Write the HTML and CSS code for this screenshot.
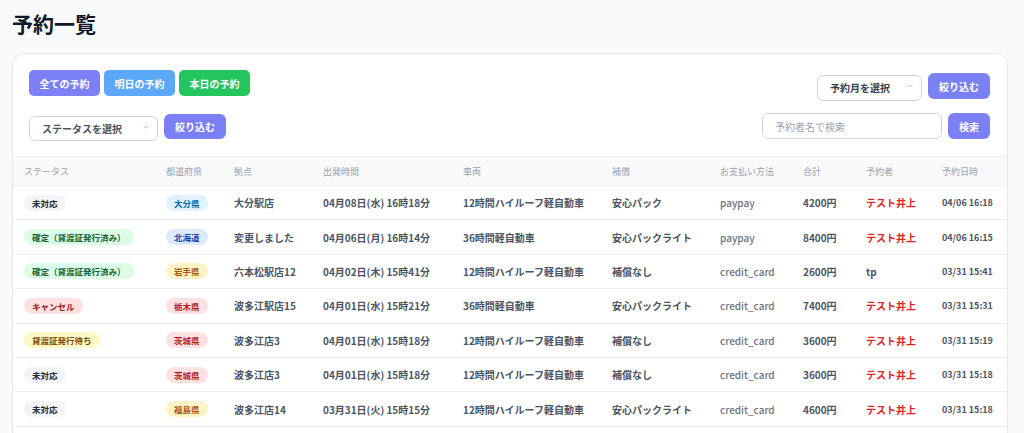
FILE: index.html
```html
<!DOCTYPE html>
<html lang="ja">
<head>
    <meta charset="UTF-8">
    <meta name="viewport" content="width=device-width, initial-scale=1.0">
    <title>予約一覧</title>
    <link rel="stylesheet" href="styles.css">
</head>
<body>

<h1 class="page-title">予約一覧</h1>

<div class="card">
    <div class="toolbar">
        <div class="toolbar-row">
            <div class="tab-buttons">
                <button class="tab-button tab-all">全ての予約</button>
                <button class="tab-button tab-tomorrow">明日の予約</button>
                <button class="tab-button tab-today">本日の予約</button>
            </div>
            <div class="filter-group month-filter">
                <div class="select-wrap month-select">
                    <select class="filter-select dark">
                        <option>予約月を選択</option>
                    </select>
                    <svg class="chevron" viewBox="0 0 10 6"><path d="M1 1l4 4 4-4" fill="none" stroke="#9ca3af" stroke-width="1.2"/></svg>
                </div>
                <button class="action-button filter-button">絞り込む</button>
            </div>
        </div>
        <div class="toolbar-row second-row">
            <div class="filter-group status-filter">
                <div class="select-wrap status-select">
                    <select class="filter-select">
                        <option>ステータスを選択</option>
                    </select>
                    <svg class="chevron" viewBox="0 0 10 6"><path d="M1 1l4 4 4-4" fill="none" stroke="#9ca3af" stroke-width="1.2"/></svg>
                </div>
                <button class="action-button filter-button">絞り込む</button>
            </div>
            <div class="filter-group">
                <input class="search-input" type="text" placeholder="予約者名で検索">
                <button class="action-button search-button">検索</button>
            </div>
        </div>
    </div>

    <table class="reservations">
        <colgroup>
            <col style="width:142px">
            <col style="width:68px">
            <col style="width:89px">
            <col style="width:140px">
            <col style="width:149px">
            <col style="width:108px">
            <col style="width:83px">
            <col style="width:63px">
            <col style="width:76px">
            <col>
        </colgroup>
        <thead>
            <tr>
                <th>ステータス</th>
                <th>都道府県</th>
                <th>拠点</th>
                <th>出発時間</th>
                <th>車両</th>
                <th>補償</th>
                <th>お支払い方法</th>
                <th>合計</th>
                <th>予約者</th>
                <th>予約日時</th>
            </tr>
        </thead>
        <tbody>
            <tr>
                <td><span class="badge status-new">未対応</span></td>
                <td><span class="badge pref-sky">大分県</span></td>
                <td>大分駅店</td>
                <td>04月08日(水) 16時18分</td>
                <td>12時間ハイルーフ軽自動車</td>
                <td>安心パック</td>
                <td class="payment">paypay</td>
                <td>4200円</td>
                <td class="customer">テスト井上</td>
                <td class="created">04/06 16:18</td>
            </tr>
            <tr>
                <td><span class="badge status-done">確定（貸渡証発行済み）</span></td>
                <td><span class="badge pref-blue">北海道</span></td>
                <td>変更しました</td>
                <td>04月06日(月) 16時14分</td>
                <td>36時間軽自動車</td>
                <td>安心パックライト</td>
                <td class="payment">paypay</td>
                <td>8400円</td>
                <td class="customer">テスト井上</td>
                <td class="created">04/06 16:15</td>
            </tr>
            <tr>
                <td><span class="badge status-done">確定（貸渡証発行済み）</span></td>
                <td><span class="badge pref-yellow">岩手県</span></td>
                <td>六本松駅店12</td>
                <td>04月02日(木) 15時41分</td>
                <td>12時間ハイルーフ軽自動車</td>
                <td>補償なし</td>
                <td class="payment">credit_card</td>
                <td>2600円</td>
                <td>tp</td>
                <td class="created">03/31 15:41</td>
            </tr>
            <tr>
                <td><span class="badge status-cancel">キャンセル</span></td>
                <td><span class="badge pref-red">栃木県</span></td>
                <td>波多江駅店15</td>
                <td>04月01日(水) 15時21分</td>
                <td>36時間軽自動車</td>
                <td>安心パックライト</td>
                <td class="payment">credit_card</td>
                <td>7400円</td>
                <td class="customer">テスト井上</td>
                <td class="created">03/31 15:31</td>
            </tr>
            <tr>
                <td><span class="badge status-wait">貸渡証発行待ち</span></td>
                <td><span class="badge pref-red">茨城県</span></td>
                <td>波多江店3</td>
                <td>04月01日(水) 15時18分</td>
                <td>12時間ハイルーフ軽自動車</td>
                <td>補償なし</td>
                <td class="payment">credit_card</td>
                <td>3600円</td>
                <td class="customer">テスト井上</td>
                <td class="created">03/31 15:19</td>
            </tr>
            <tr>
                <td><span class="badge status-new">未対応</span></td>
                <td><span class="badge pref-red">茨城県</span></td>
                <td>波多江店3</td>
                <td>04月01日(水) 15時18分</td>
                <td>12時間ハイルーフ軽自動車</td>
                <td>補償なし</td>
                <td class="payment">credit_card</td>
                <td>3600円</td>
                <td class="customer">テスト井上</td>
                <td class="created">03/31 15:18</td>
            </tr>
            <tr>
                <td><span class="badge status-new">未対応</span></td>
                <td><span class="badge pref-yellow">福島県</span></td>
                <td>波多江店14</td>
                <td>03月31日(火) 15時15分</td>
                <td>12時間ハイルーフ軽自動車</td>
                <td>安心パックライト</td>
                <td class="payment">credit_card</td>
                <td>4600円</td>
                <td class="customer">テスト井上</td>
                <td class="created">03/31 15:18</td>
            </tr>
        </tbody>
    </table>
</div>

</body>
</html>
```

FILE: styles.css
```css
body {
    margin: 0;
    padding: 8px 16px 0 12px;
    background-color: #f8fafc;
    font-family: "Noto Sans CJK JP", "Noto Sans", sans-serif;
    color: #111827;
}

.page-title {
    margin: 0 0 15px;
    font-size: 21px;
    line-height: 30px;
    font-weight: bold;
    color: #111827;
}

.card {
    background-color: white;
    border: 1px solid #e5e7eb;
    border-radius: 12px;
    box-shadow: 0 1px 2px rgba(0, 0, 0, 0.04);
    padding: 16px 0 16px;
    overflow: hidden;
}

.toolbar {
    padding: 0 17px 0 16px;
    margin-bottom: 17px;
}

.toolbar-row {
    display: flex;
    justify-content: space-between;
    align-items: flex-start;
    height: 29px;
}

.second-row {
    margin-top: 14px;
    height: 26px;
}

.tab-buttons {
    display: flex;
    gap: 4px;
}

button {
    font-family: inherit;
    border: none;
    cursor: pointer;
    color: white;
    font-weight: bold;
    font-size: 10px;
}

.tab-button {
    height: 26px;
    padding: 0 10px;
    border-radius: 5px;
    width: 71px;
}

.tab-all {
    background-color: #7c80f6;
}

.tab-tomorrow {
    background-color: #5ca7f6;
}

.tab-today {
    background-color: #22c55e;
}

.filter-group {
    display: flex;
    gap: 6px;
}

.month-filter {
    margin-top: 3px;
}

.status-filter {
    margin-top: 1px;
}

.select-wrap {
    position: relative;
}

.filter-select {
    appearance: none;
    -webkit-appearance: none;
    height: 26px;
    background-color: white;
    border: 1px solid #d1d5db;
    border-radius: 6px;
    padding: 0 0 0 12px;
    font-family: inherit;
    font-size: 10px;
    font-weight: 600;
    color: #4b5563;
}

.filter-select.dark {
    color: #374151;
}

.month-select .filter-select {
    width: 105px;
}

.status-select .filter-select {
    width: 129px;
    height: 25px;
}

.chevron {
    position: absolute;
    right: 9px;
    top: 11px;
    width: 6px;
    height: 4px;
}

.action-button {
    height: 26px;
    border-radius: 6px;
    background-color: #7c80f6;
}

.filter-button {
    width: 62px;
}

.status-filter .filter-button {
    height: 25px;
}

.search-button {
    width: 42px;
}

.search-input {
    width: 180px;
    height: 26px;
    box-sizing: border-box;
    border: 1px solid #d1d5db;
    border-radius: 6px;
    padding: 0 12px;
    font-family: inherit;
    font-size: 10px;
}

.search-input::placeholder {
    color: #9ca3af;
}

.reservations {
    width: 100%;
    table-layout: fixed;
    border-collapse: collapse;
}

.reservations th {
    height: 28px;
    padding: 0 0 0 11px;
    background-color: #f9fafb;
    border-top: 1px solid #eceef1;
    text-align: left;
    font-size: 9px;
    font-weight: normal;
    color: #9ca3af;
    white-space: nowrap;
}

.reservations td {
    height: 33.4px;
    padding: 0 0 0 11px;
    border-top: 1px solid #eceef1;
    border-bottom: 1px solid #eceef1;
    font-size: 10px;
    font-weight: 600;
    color: #4b5563;
    white-space: nowrap;
}

.reservations td.payment {
    font-weight: 500;
    color: #6b7280;
}

.reservations td.customer {
    color: #dc2626;
    font-weight: bold;
}

.reservations td.created {
    font-size: 9px;
}

.badge {
    display: inline-block;
    height: 16px;
    line-height: 16px;
    padding: 0 8px;
    border-radius: 8px;
    font-size: 8.5px;
    font-weight: bold;
}

.status-new {
    background-color: #f3f4f6;
    color: #1f2937;
}

.status-done {
    background-color: #dcfce7;
    color: #166534;
}

.status-cancel {
    background-color: #fee2e2;
    color: #991b1b;
}

.status-wait {
    background-color: #fef9c3;
    color: #854d0e;
}

.pref-sky {
    background-color: #e0f2fe;
    color: #0369a1;
}

.pref-blue {
    background-color: #dbeafe;
    color: #1e40af;
}

.pref-yellow {
    background-color: #fef3c7;
    color: #b45309;
}

.pref-red {
    background-color: #fee2e2;
    color: #b91c1c;
}
```
